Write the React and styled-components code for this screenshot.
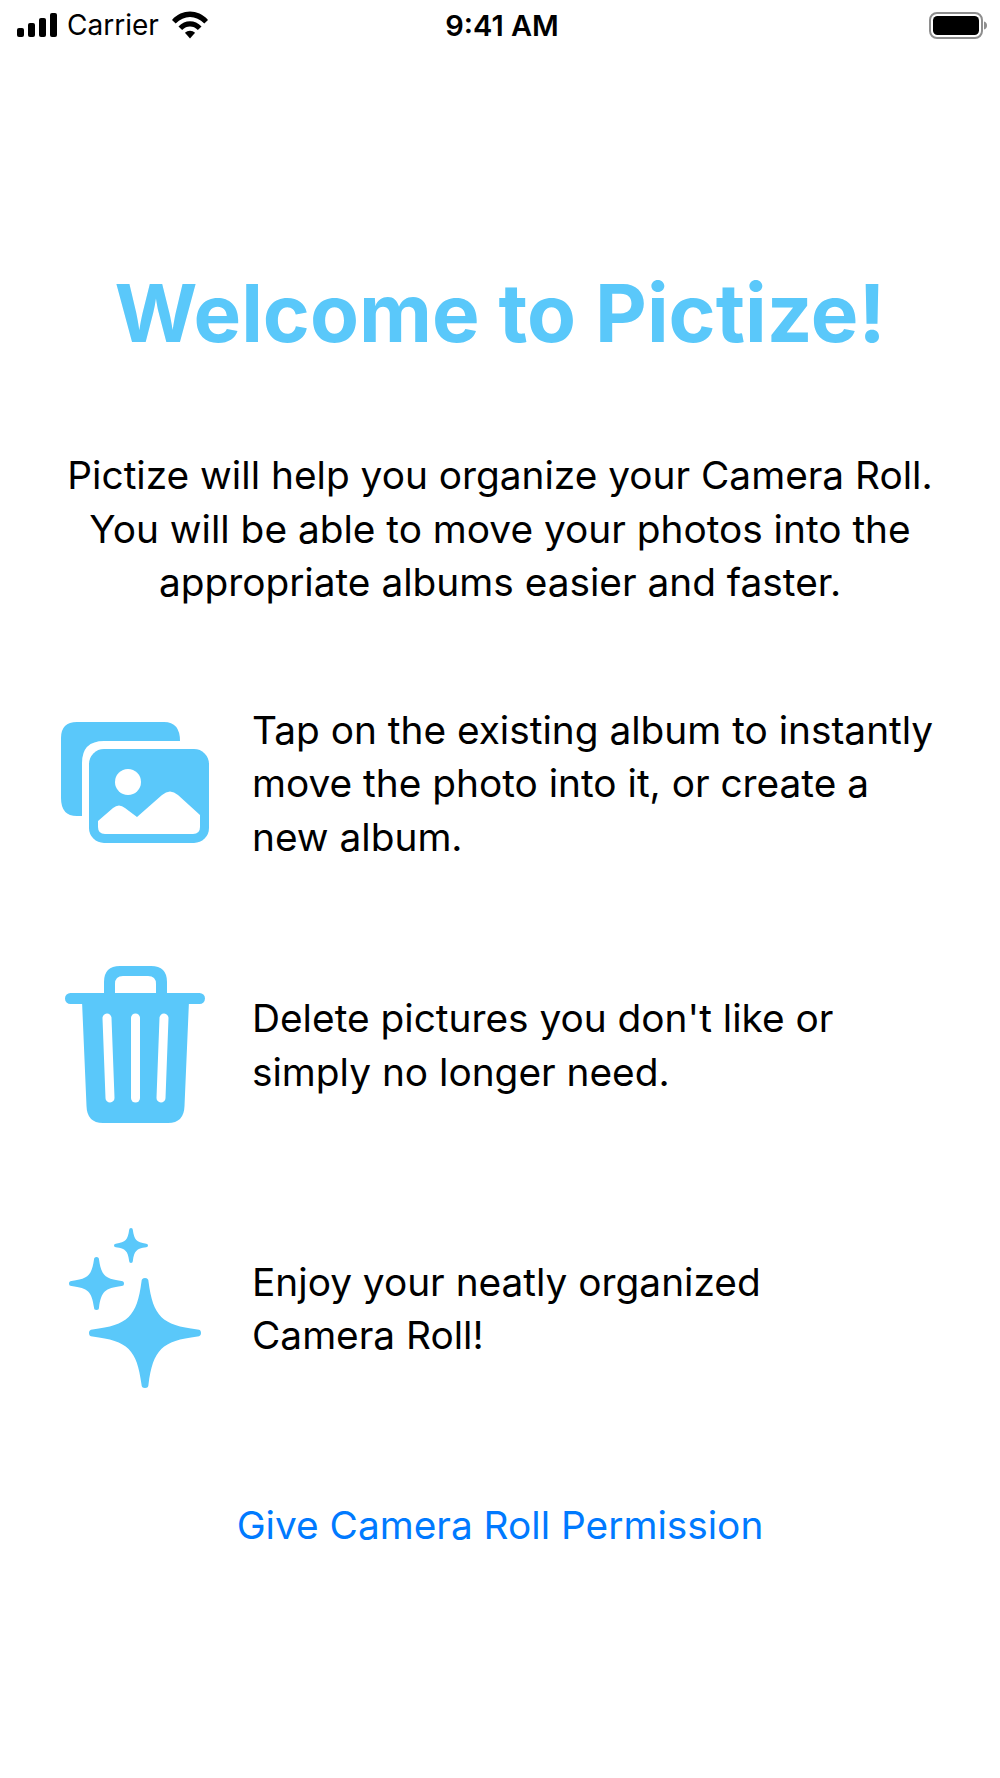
import React from "react";
import styled, { createGlobalStyle } from "styled-components";

const GlobalStyle = createGlobalStyle`
  html, body { margin: 0; padding: 0; background: #fff; }
  body { font-family: Inter, "Liberation Sans", sans-serif; color: #000; }
`;

const Page = styled.div`
  width: 1000px;
  height: 1778px;
  overflow: hidden;
  background: #fff;
`;

const StatusBar = styled.div`
  height: 50px;
  display: grid;
  grid-template-columns: 1fr auto 1fr;
  align-items: center;
  padding: 0 13px 0 17px;
`;

const StatusLeft = styled.div`
  display: flex;
  align-items: center;
`;

const Carrier = styled.span`
  font-size: 28px;
  margin: 0 13px 0 10px;
`;

const Clock = styled.span`
  font-size: 29px;
  font-weight: 600;
`;

const StatusRight = styled.div`
  display: flex;
  justify-content: flex-end;
`;

const Title = styled.h1`
  margin: 213px 0 0;
  text-align: center;
  font-size: 80px;
  line-height: 100px;
  font-weight: 700;
  color: #5ac8fa;
`;

const Intro = styled.p`
  margin: 85px 0 0;
  text-align: center;
  font-size: 38.8px;
  line-height: 53.5px;
`;

const Features = styled.div`
  margin-top: 94px;
  display: flex;
  flex-direction: column;
  gap: 103px;
`;

const Feature = styled.div`
  display: grid;
  grid-template-columns: 148px 1fr;
  column-gap: 43px;
  align-items: center;
  padding-left: 61px;

  &:last-child {
    margin-top: 2px;
  }
`;

const IconSlot = styled.div`
  display: flex;
  justify-content: center;
`;

const FeatureText = styled.div`
  font-size: 38.8px;
  line-height: 53.5px;
`;

const PermissionLink = styled.a`
  display: block;
  margin-top: 110px;
  text-align: center;
  font-size: 38.8px;
  line-height: 53.5px;
  color: #007aff;
`;

const SignalIcon = () => (
  <svg width="40" height="24" viewBox="0 0 40 24" fill="#000">
    <rect x="0" y="15" width="7" height="9" rx="2" />
    <rect x="11" y="10" width="7" height="14" rx="2" />
    <rect x="22" y="5" width="7" height="19" rx="2" />
    <rect x="33" y="0" width="7" height="24" rx="2" />
  </svg>
);

const WifiIcon = () => (
  <svg width="36" height="28" viewBox="0 0 39 30" fill="#000">
    <path d="M0 9.5 C11 -2.5 28 -2.5 39 9.5 L35 13.5 C26 4 13 4 4 13.5 Z" />
    <path d="M7 16.5 C14 9 25 9 32 16.5 L28 20.5 C23 15.5 16 15.5 11 20.5 Z" />
    <path d="M14 23.5 C17 20.5 22 20.5 25 23.5 L19.5 29.5 Z" />
  </svg>
);

const BatteryIcon = () => (
  <svg width="58" height="27" viewBox="0 0 58 27">
    <rect x="1" y="1" width="52" height="25" rx="7" fill="none" stroke="#8e8e8e" strokeWidth="2" />
    <rect x="4" y="4" width="46" height="19" rx="4.5" fill="#000" />
    <path d="M55 9.5 C57 10 58 11.5 58 13.5 C58 15.5 57 17 55 17.5 Z" fill="#8e8e8e" />
  </svg>
);

const PhotosIcon = () => (
  <svg width="148" height="121" viewBox="21 22 148 121" fill="#5ac8fa">
    <path d="M37 22 H124 Q140 22 140 41 H64 Q42 41 42 63 V116 H37 Q21 116 21 98 V38 Q21 22 37 22 Z" />
    <rect x="49" y="49" width="120" height="94" rx="15" />
    <circle cx="88" cy="82" r="13" fill="#fff" />
    <path
      d="M58 121 L73 108 Q79 103 85 108 L97 117 L122 95 Q130 88 138 95 L160 115 V127 Q160 134 153 134 H65 Q58 134 58 127 Z"
      fill="#fff"
    />
  </svg>
);

const TrashIcon = () => (
  <svg width="140" height="157" viewBox="15 15 140 157" fill="#5ac8fa">
    <path
      fillRule="evenodd"
      d="M70 15 H101 Q117 15 117 31 V45 H106 V33 Q106 25 98 25 H73 Q65 25 65 33 V45 H54 V31 Q54 15 70 15 Z"
    />
    <rect x="15" y="42" width="140" height="11" rx="5.5" />
    <path d="M32 50 H139 L134.5 155 Q134 172 118 172 H53 Q37 172 36.5 155 Z" />
    <g stroke="#fff" strokeWidth="9" strokeLinecap="round">
      <path d="M57 67 L60 147" />
      <path d="M85.5 67 V147" />
      <path d="M114 67 L111 147" />
    </g>
  </svg>
);

// four pointed star, each tip rounded off with a small arc
const starPath = (cx, cy, rx, ry, tip) => {
  const nearX = tip * 1.2 + rx * 0.07;
  const nearY = tip * 1.2 + ry * 0.07;
  const fx = rx * 0.3;
  const fy = ry * 0.3;
  return [
    `M${cx - tip} ${cy - ry + tip}`,
    `A${tip} ${tip} 0 0 1 ${cx + tip} ${cy - ry + tip}`,
    `C${cx + nearX} ${cy - fy} ${cx + fx} ${cy - nearY} ${cx + rx - tip} ${cy - tip}`,
    `A${tip} ${tip} 0 0 1 ${cx + rx - tip} ${cy + tip}`,
    `C${cx + fx} ${cy + nearY} ${cx + nearX} ${cy + fy} ${cx + tip} ${cy + ry - tip}`,
    `A${tip} ${tip} 0 0 1 ${cx - tip} ${cy + ry - tip}`,
    `C${cx - nearX} ${cy + fy} ${cx - fx} ${cy + nearY} ${cx - rx + tip} ${cy + tip}`,
    `A${tip} ${tip} 0 0 1 ${cx - rx + tip} ${cy - tip}`,
    `C${cx - fx} ${cy - nearY} ${cx - nearX} ${cy - fy} ${cx - tip} ${cy - ry + tip}`,
    "Z",
  ].join(" ");
};

const SparklesIcon = () => (
  <svg width="132" height="160" viewBox="19 17 132 160" fill="#5ac8fa">
    <path d={starPath(95, 122, 56, 55, 3.5)} />
    <path d={starPath(46.5, 72.5, 27.5, 26.5, 2.5)} />
    <path d={starPath(81, 34.5, 17, 17.5, 1.8)} />
  </svg>
);

const features = [
  { icon: <PhotosIcon />, lines: ["Tap on the existing album to instantly", "move the photo into it, or create a", "new album."] },
  { icon: <TrashIcon />, lines: ["Delete pictures you don't like or", "simply no longer need."] },
  { icon: <SparklesIcon />, lines: ["Enjoy your neatly organized", "Camera Roll!"] },
];

const App = () => {
  return (
    <Page>
      <GlobalStyle />
      <StatusBar>
        <StatusLeft>
          <SignalIcon />
          <Carrier>Carrier</Carrier>
          <WifiIcon />
        </StatusLeft>
        <Clock>9:41 AM</Clock>
        <StatusRight>
          <BatteryIcon />
        </StatusRight>
      </StatusBar>
      <Title>Welcome to Pictize!</Title>
      <Intro>
        Pictize will help you organize your Camera Roll.
        <br />
        You will be able to move your photos into the
        <br />
        appropriate albums easier and faster.
      </Intro>
      <Features>
        {features.map((feature) => (
          <Feature key={feature.lines[0]}>
            <IconSlot>{feature.icon}</IconSlot>
            <FeatureText>
              {feature.lines.map((line) => (
                <div key={line}>{line}</div>
              ))}
            </FeatureText>
          </Feature>
        ))}
      </Features>
      <PermissionLink>Give Camera Roll Permission</PermissionLink>
    </Page>
  );
};

export default App;
